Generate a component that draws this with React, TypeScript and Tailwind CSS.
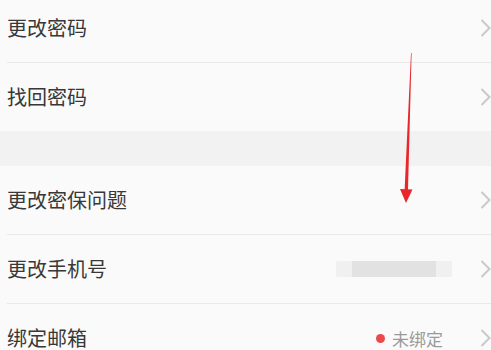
import React from "react";

const FONT = "font-['Noto_Sans_CJK_SC','Noto_Sans',sans-serif]";

function Chevron() {
  return (
    <svg width="11" height="18" viewBox="0 0 11 18" className="shrink-0">
      <path d="M1.5 1 L9.5 9 L1.5 17" fill="none" stroke="#c9c9c9" strokeWidth="2" />
    </svg>
  );
}

function Row({ label, right, divider = true }: { label: string; right?: React.ReactNode; divider?: boolean }) {
  return (
    <div className="bg-[#fafafa]">
      <div className="flex h-[68px] items-center pl-[7px]">
        <span className="text-[20px] leading-none text-[#383838]">{label}</span>
        <div className="ml-auto flex items-center">
          {right}
          <div className="ml-[28px]">
            <Chevron />
          </div>
        </div>
      </div>
      {divider && <div className="ml-[7px] h-px bg-[#e9e9e9]" />}
    </div>
  );
}

export default function App() {
  return (
    <div className={`relative h-[350px] w-[491px] overflow-hidden bg-[#fafafa] ${FONT}`}>
      <div className="-mt-[6px]">
        <Row label="更改密码" />
        <Row label="找回密码" divider={false} />
        <div className="h-[35px] bg-[#f2f2f2]" />
        <Row label="更改密保问题" />
        <Row
          label="更改手机号"
          right={
            <div className="flex h-[16px] w-[116px] items-center rounded-[2px] bg-[#f0f0f0]">
              <div className="mx-auto h-[16px] w-[84px] bg-[#e2e2e2]" />
            </div>
          }
        />
        <Row
          label="绑定邮箱"
          divider={false}
          right={
            <div className="mr-[9px] flex items-center gap-[7px]">
              <span className="h-[9px] w-[9px] rounded-full bg-[#ea4a4a]" />
              <span className="text-[17px] leading-none text-[#9a9a9a]">未绑定</span>
            </div>
          }
        />
      </div>
      <svg className="pointer-events-none absolute left-0 top-0" width="491" height="350">
        <polygon points="411,53 411.6,53 408,190 404.6,190" fill="#e8262b" />
        <polygon points="400,189 412.5,189.5 406,203" fill="#e8262b" />
      </svg>
    </div>
  );
}
